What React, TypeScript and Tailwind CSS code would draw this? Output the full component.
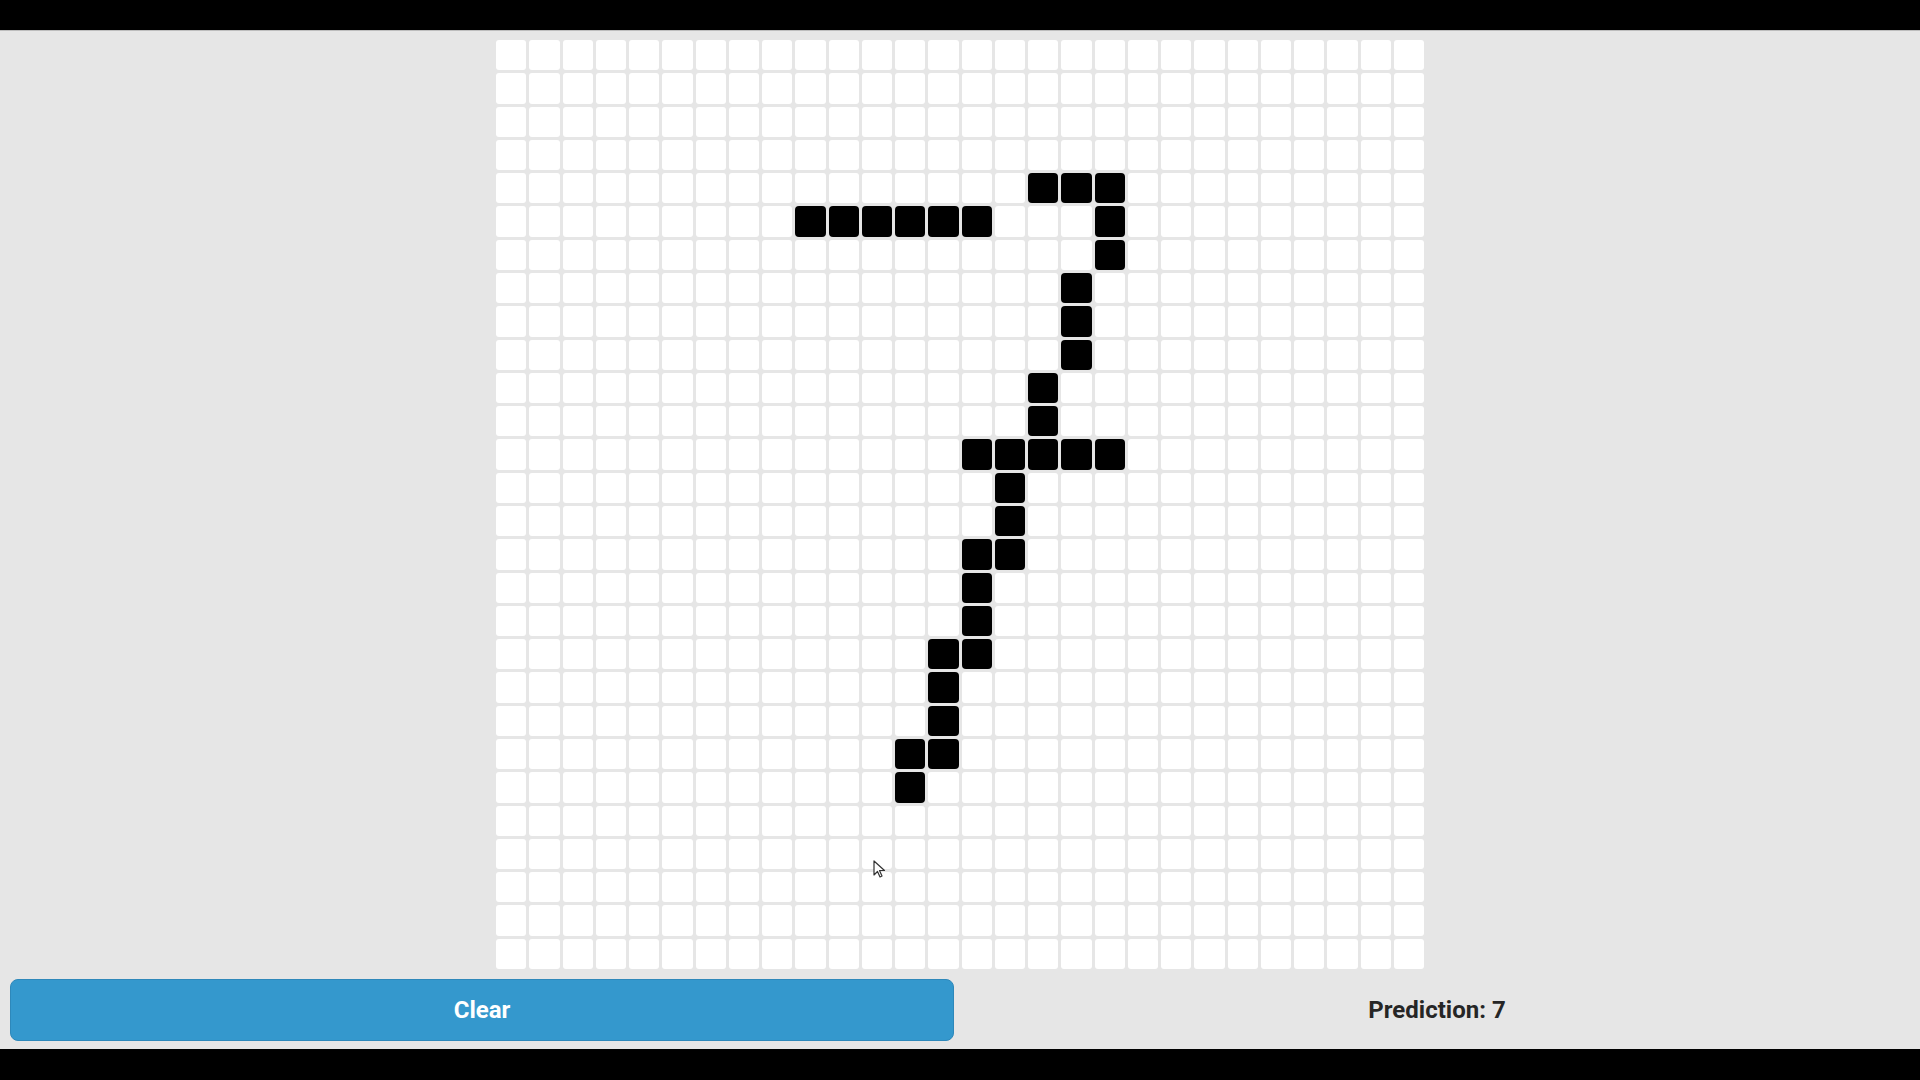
import { useState } from 'react';

const SIZE = 28;

// drawn strokes of the "7", as [row, col]
const strokes: [number, number][] = [
    [4, 16], [4, 17], [4, 18],
    [5, 9], [5, 10], [5, 11], [5, 12], [5, 13], [5, 14], [5, 18],
    [6, 18],
    [7, 17], [8, 17], [9, 17],
    [10, 16], [11, 16],
    [12, 14], [12, 15], [12, 16], [12, 17], [12, 18],
    [13, 15], [14, 15],
    [15, 14], [15, 15],
    [16, 14], [17, 14],
    [18, 13], [18, 14],
    [19, 13], [20, 13],
    [21, 12], [21, 13],
    [22, 12],
];

function initialGrid() {
    const g = Array.from({ length: SIZE }, () => Array(SIZE).fill(0));
    strokes.forEach(([r, c]) => (g[r][c] = 1));
    return g;
}

export default function App() {
    const [grid, setGrid] = useState<number[][]>(initialGrid);
    const [prediction, setPrediction] = useState<string>('7');

    const clear = () => {
        setGrid(Array.from({ length: SIZE }, () => Array(SIZE).fill(0)));
        setPrediction('');
    };

    return (
        <div className="w-[1920px] h-[1080px] flex flex-col bg-black" style={{ fontFamily: 'Roboto, "Liberation Sans", sans-serif' }}>
            <div className="h-[30px] bg-black" />
            <div className="relative h-[1019px] bg-[#e6e6e6] border-t border-[#bdbdbd] flex flex-col">
                <div className="flex justify-center pt-[9px]">
                    <div className="w-[928px] h-[929px] grid grid-cols-[repeat(28,1fr)] grid-rows-[repeat(28,1fr)] gap-[3px]">
                        {grid.map((row, r) =>
                            row.map((v, c) => (
                                <div
                                    key={`${r}-${c}`}
                                    className={v ? 'bg-black rounded-[4px]' : 'bg-white rounded-[3px]'}
                                />
                            ))
                        )}
                    </div>
                </div>

                <div className="flex items-center mt-[10px]">
                    <button
                        onClick={clear}
                        className="ml-[10px] w-[944px] h-[62px] rounded-[8px] bg-[#3498cd] border border-[#2e88ba] text-white text-[24px] font-bold"
                    >
                        Clear
                    </button>
                    <div className="flex-1 text-center text-[24px] font-bold text-[#262626]">
                        Prediction: {prediction}
                    </div>
                </div>

                {/* mouse pointer */}
                <svg className="absolute left-[873px] top-[829px]" width="14" height="20" viewBox="0 0 14 20">
                    <path d="M1 1 L1 15 L4.5 11.5 L7 17 L9 16 L6.5 10.5 L11.5 10.5 Z" fill="#fff" stroke="#333" strokeWidth="1.2" strokeLinejoin="round" />
                </svg>
            </div>
            <div className="flex-1 bg-black" />
        </div>
    );
}
